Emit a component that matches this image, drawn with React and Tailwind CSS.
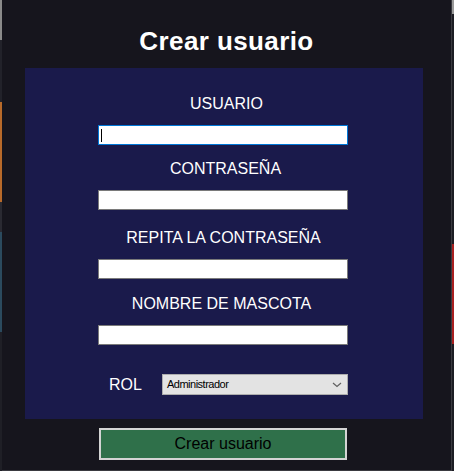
import React from 'react';

const font = { fontFamily: '"Liberation Sans", Arial, sans-serif' };

const Field = ({ focused }) => (
  <div
    className={`ml-[73px] w-[250px] h-[20px] bg-white border ${focused ? 'border-[#0078d7]' : 'border-[#7a7a7a]'} flex items-center`}
  >
    {focused && <span className="ml-[2px] w-px h-[13px] bg-black" />}
  </div>
);

const Label = ({ children, className = 'pl-[5px]' }) => (
  <div className={`text-center text-white text-[16px] leading-[18px] ${className}`}>{children}</div>
);

export default function App() {
  return (
    <div className="w-[454px] h-[471px] bg-[#16151d] flex overflow-hidden" style={font}>
      {/* bordes de la ventana */}
      <div className="w-[2px] h-full flex flex-col">
        <div className="h-[40px] bg-[#8a8a8a]" />
        <div className="h-[62px] bg-[#22222a]" />
        <div className="h-[100px] bg-[#b86a2a]" />
        <div className="h-[30px] bg-[#2a2a32]" />
        <div className="h-[100px] bg-[#2b4a5e]" />
        <div className="flex-1 bg-[#1f1f26]" />
      </div>

      <div className="w-[449px] h-full flex flex-col border-b border-[#3a3a40]">
        <h1 className="pt-[26px] text-center text-white text-[26px] leading-[30px] font-bold tracking-[0.4px]">
          Crear usuario
        </h1>

        <div className="mt-[12px] ml-[23px] w-[398px] bg-[#1a1a4b] pt-[27px] pb-[24px] flex flex-col">
          <Label>USUARIO</Label>
          <div className="mt-[12px]"><Field focused /></div>

          <Label className="mt-[15px] pl-[3px]">CONTRASEÑA</Label>
          <div className="mt-[12px]"><Field /></div>

          <Label className="mt-[19px] pr-[1px]">REPITA LA CONTRASEÑA</Label>
          <div className="mt-[12px]"><Field /></div>

          <Label className="mt-[16px] pr-[5px]">NOMBRE DE MASCOTA</Label>
          <div className="mt-[12px]"><Field /></div>

          <div className="mt-[29px] ml-[84px] flex items-center">
            <span className="w-[53px] text-white text-[16px] leading-[18px]">ROL</span>
            <div className="w-[186px] h-[21px] bg-[#e3e3e3] border border-[#adadad] flex items-center justify-between pl-[4px] pr-[4px]">
              <span className="text-[11px] tracking-[-0.5px] text-black">Administrador</span>
              <svg width="10" height="6" viewBox="0 0 10 6" className="mr-[1px]">
                <polyline points="1,1 5,4.5 9,1" fill="none" stroke="#606060" strokeWidth="1.2" />
              </svg>
            </div>
          </div>
        </div>

        <button className="mt-[9px] ml-[97px] w-[248px] h-[32px] bg-[#2f704a] border-[2px] border-[#d4d4d4] text-black text-[16px] leading-[18px] flex items-center justify-center">
          Crear usuario
        </button>
      </div>

      <div className="w-[3px] h-full flex flex-col border-l border-[#3a3a40]">
        <div className="h-[14px] bg-[#9a9a9a]" />
        <div className="h-[230px] bg-[#1d1d24]" />
        <div className="h-[100px] bg-[#a82020]" />
        <div className="flex-1 bg-[#1d1d24]" />
      </div>
    </div>
  );
}
